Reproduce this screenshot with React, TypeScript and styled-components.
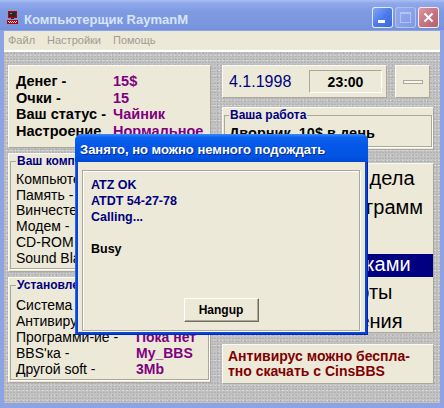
import React from 'react';
import styled, { createGlobalStyle } from 'styled-components';

const GlobalStyle = createGlobalStyle`
  html, body {
    margin: 0;
    padding: 0;
    background: #fff;
  }
  body {
    width: 444px;
    height: 408px;
    overflow: hidden;
    font-family: "Liberation Sans", Arial, sans-serif;
  }
  * {
    box-sizing: border-box;
  }
`;

const Window = styled.div`
  position: relative;
  width: 444px;
  height: 408px;
  display: flex;
  flex-direction: column;
  background: #8ea3e4;
  overflow: hidden;
`;

const TitleBar = styled.div`
  height: 30px;
  flex: none;
  display: flex;
  align-items: center;
  padding: 4px 5px 0 7px;
  background: linear-gradient(to bottom, #aabff3 0%, #90a9ec 10%, #7e9ae1 40%, #7a96df 85%, #7390dc 100%);
`;

const AppIcon = styled.svg`
  width: 11px;
  height: 13px;
  flex: none;
`;

const TitleText = styled.div`
  flex: 1;
  margin-left: 6px;
  padding-top: 5px;
  color: #d8e4f8;
  font-size: 13px;
  font-weight: bold;
  white-space: nowrap;
`;

const CaptionButtons = styled.div`
  display: flex;
  gap: 2px;
`;

const CaptionButton = styled.div<{ $kind: 'min' | 'max' | 'close' }>`
  width: 21px;
  height: 21px;
  border-radius: 3px;
  display: flex;
  align-items: ${p => (p.$kind === 'min' ? 'flex-end' : 'center')};
  justify-content: ${p => (p.$kind === 'min' ? 'flex-start' : 'center')};
  padding: ${p => (p.$kind === 'min' ? '0 0 4px 5px' : '0')};
  border: 1px solid ${p => (p.$kind === 'max' ? 'rgba(255,255,255,0.35)' : 'rgba(255,255,255,0.85)')};
  background: ${p =>
    p.$kind === 'min'
      ? 'linear-gradient(135deg, #82a6f7 0%, #4d7bec 50%, #3a68e4 100%)'
      : p.$kind === 'max'
      ? 'linear-gradient(135deg, #93abee 0%, #8199e2 100%)'
      : 'linear-gradient(135deg, #dc97a0 0%, #c47682 50%, #b5606e 100%)'};
`;

const MinGlyph = styled.span`
  width: 7px;
  height: 3px;
  background: #fff;
`;

const MaxGlyph = styled.span`
  width: 11px;
  height: 11px;
  border: 1px solid rgba(255, 255, 255, 0.35);
  border-top-width: 2px;
`;

const Frame = styled.div`
  flex: 1;
  display: flex;
  flex-direction: column;
  padding: 1px 4px 5px 4px;
  min-height: 0;
`;

const MenuBar = styled.div`
  height: 21px;
  flex: none;
  display: flex;
  align-items: center;
  gap: 12px;
  padding: 0 0 2px 4px;
  background: #ece9d8;
  border-bottom: 2px solid #fff;
  font-size: 11px;
  color: #9e9b91;
`;

const Client = styled.div`
  flex: 1;
  display: flex;
  gap: 11px;
  padding: 13px 0 0 4px;
  background-color: #c4c4c4;
  background-image:
    radial-gradient(circle at 30% 40%, rgba(0, 0, 0, 0.09) 0.7px, transparent 1px),
    radial-gradient(circle at 70% 70%, rgba(255, 255, 255, 0.35) 0.7px, transparent 1px),
    radial-gradient(circle at 50% 20%, rgba(0, 0, 0, 0.07) 0.7px, transparent 1px);
  background-size: 3px 3px, 4px 5px, 7px 6px;
`;

const LeftColumn = styled.div`
  width: 203px;
  flex: none;
  display: flex;
  flex-direction: column;
  gap: 5px;
`;

const RightColumn = styled.div`
  width: 212px;
  flex: none;
  display: flex;
  flex-direction: column;
`;

const Panel = styled.div<{ $h: number; $mt?: number }>`
  height: ${p => p.$h}px;
  margin-top: ${p => p.$mt ?? 0}px;
  flex: none;
  background: #ece9d8;
  border: 1px solid;
  border-color: #fbfaf5 #aca899 #aca899 #fbfaf5;
`;

const GroupPanel = styled(Panel)`
  display: flex;
  flex-direction: column;
  padding: 0 1px 2px 1px;
`;

const Fieldset = styled.fieldset<{ $pl: number; $pt: number }>`
  flex: 1;
  min-width: 0;
  margin: 1px 0 0 0;
  padding: ${p => p.$pt}px 0 0 ${p => p.$pl}px;
  border: 1px solid #aca899;
  box-shadow: 1px 1px 0 #fff;
  overflow: hidden;
`;

const Legend = styled.legend`
  padding: 0 1px;
  color: #000080;
  font-size: 12px;
  font-weight: bold;
  line-height: 12px;
`;

const Rows = styled.div<{ $label: number; $size: number; $lh: number; $bold?: boolean }>`
  display: grid;
  grid-template-columns: ${p => p.$label}px auto;
  font-size: ${p => p.$size}px;
  line-height: ${p => p.$lh}px;
  font-weight: ${p => (p.$bold ? 'bold' : 'normal')};
  white-space: nowrap;
`;

const StatsRows = styled(Rows)`
  padding: 7px 0 0 7px;
`;

const Label = styled.span`
  color: #000;
`;

const Value = styled.span`
  color: #800080;
  font-weight: bold;
`;

const DateRow = styled.div`
  height: 33px;
  display: flex;
  gap: 8px;
`;

const DatePanel = styled(Panel)`
  width: 165px;
  display: flex;
  align-items: center;
  justify-content: space-between;
  padding: 0 4px 0 6px;
`;

const DateText = styled.span`
  color: #000080;
  font-size: 16px;
`;

const TimeBox = styled.div`
  width: 73px;
  height: 23px;
  display: flex;
  align-items: center;
  justify-content: center;
  border: 1px solid;
  border-color: #aca899 #fff #fff #aca899;
  font-size: 14px;
  font-weight: bold;
  color: #000;
`;

const SmallButtonPanel = styled(Panel)`
  width: 35px;
  display: flex;
  align-items: center;
  justify-content: center;
`;

const Dash = styled.span`
  width: 20px;
  height: 4px;
  background: #f7f6f0;
  border: 1px solid #aca899;
`;

const JobText = styled.div`
  font-size: 14.5px;
  line-height: 16.5px;
  font-weight: bold;
  color: #000;
  white-space: nowrap;
`;

const ActionsPanel = styled(Panel)`
  display: flex;
  flex-direction: column;
  gap: 5.6px;
  padding-top: 4px;
  overflow: hidden;
`;

const ActionItem = styled.div<{ $active?: boolean }>`
  height: 23px;
  flex: none;
  line-height: 21px;
  padding-bottom: 2px;
  text-align: center;
  font-size: 20px;
  white-space: nowrap;
  color: ${p => (p.$active ? '#fff' : '#000')};
  background: ${p => (p.$active ? '#000080' : 'transparent')};
`;

const TipPanel = styled(Panel)`
  padding: 4px 0 0 5px;
  color: #800000;
  font-size: 14px;
  font-weight: bold;
  line-height: 15px;
`;

const Dialog = styled.div`
  position: absolute;
  left: 75px;
  top: 134px;
  width: 293px;
  height: 201px;
  display: flex;
  flex-direction: column;
  background: #0845db;
  border-radius: 7px 7px 0 0;
  box-shadow: inset -1px -1px 0 #0027a8, inset 1px 0 0 #2a64e8;
`;

const DialogTitle = styled.div`
  height: 28px;
  flex: none;
  display: flex;
  align-items: center;
  padding: 3px 0 0 5px;
  border-radius: 7px 7px 0 0;
  background: linear-gradient(to bottom, #3d8af7 0%, #0c62ee 12%, #0356e8 45%, #0254e3 80%, #0047d4 100%);
  color: #fff;
  font-size: 13px;
  font-weight: bold;
  white-space: nowrap;
  text-shadow: 1px 1px 0 #0a2a8c;
`;

const DialogBody = styled.div`
  flex: 1;
  display: flex;
  margin: 0 3px 3px 3px;
  padding: 8px 5px 1px 4px;
  background: #ece9d8;
`;

const Console = styled.div`
  flex: 1;
  display: flex;
  flex-direction: column;
  padding: 6px 8px 8px 8px;
  border: 1px solid #aca899;
  box-shadow: 1px 1px 0 #fff, inset 1px 1px 0 #fff;
`;

const ConsoleLine = styled.div<{ $color?: string }>`
  min-height: 16px;
  font-size: 12.5px;
  line-height: 16px;
  font-weight: bold;
  color: ${p => p.$color ?? '#000080'};
  white-space: nowrap;
`;

const HangupButton = styled.button`
  align-self: center;
  margin-top: auto;
  width: 75px;
  height: 24px;
  padding: 0;
  background: #ece9d8;
  border: 1px solid;
  border-color: #fff #716f64 #716f64 #fff;
  box-shadow: inset -1px -1px 0 #aca899;
  font-family: "Liberation Sans", Arial, sans-serif;
  font-size: 12px;
  font-weight: bold;
  color: #000;
`;

const stats = [
  ['Денег -', '15$'],
  ['Очки -', '15'],
  ['Ваш статус -', 'Чайник'],
  ['Настроение', 'Нормальное'],
];

const hardware = [
  ['Компьютер -', '286'],
  ['Память -', '1Mb'],
  ['Винчестер -', '40Mb'],
  ['Модем -', '2400'],
  ['CD-ROM -', 'Нет'],
  ['Sound Blaster -', 'Нет'],
];

const software = [
  ['Система -', 'DOS 6.22'],
  ['Антивирус -', 'Нет'],
  ['Программи-ие -', 'Пока нет'],
  ["BBS'ка -", 'My_BBS'],
  ['Другой soft -', '3Mb'],
];

const actions = [
  'Мои текущие дела',
  'Установка программ',
  'Казино',
  'Работа с дисками',
  'Поиск работы',
  'Курсы обучения',
];

const App: React.FC = () => {
  return (
    <>
      <GlobalStyle />
      <Window>
        <TitleBar>
          <AppIcon viewBox="0 0 11 13">
            <rect x="1" y="0" width="9" height="7" fill="#c00000" />
            <rect x="2" y="1" width="7" height="5" fill="#2a2a2a" />
            <rect x="3" y="2" width="2" height="1" fill="#8a8a8a" />
            <rect x="4" y="7" width="3" height="1" fill="#800000" />
            <rect x="0" y="9" width="11" height="4" fill="#c00000" />
            <rect x="1" y="10" width="1" height="1" fill="#fff" />
            <rect x="3" y="10" width="1" height="1" fill="#fff" />
            <rect x="5" y="10" width="1" height="1" fill="#fff" />
            <rect x="7" y="10" width="1" height="1" fill="#fff" />
            <rect x="9" y="10" width="1" height="1" fill="#fff" />
            <rect x="2" y="11" width="1" height="1" fill="#fff" />
            <rect x="4" y="11" width="1" height="1" fill="#fff" />
            <rect x="6" y="11" width="1" height="1" fill="#fff" />
            <rect x="8" y="11" width="1" height="1" fill="#fff" />
          </AppIcon>
          <TitleText>Компьютерщик RaymanM</TitleText>
          <CaptionButtons>
            <CaptionButton $kind="min">
              <MinGlyph />
            </CaptionButton>
            <CaptionButton $kind="max">
              <MaxGlyph />
            </CaptionButton>
            <CaptionButton $kind="close">
              <svg width="11" height="11" viewBox="0 0 11 11">
                <path d="M1.5 1.5 L9.5 9.5 M9.5 1.5 L1.5 9.5" stroke="#fff" strokeWidth="2" />
              </svg>
            </CaptionButton>
          </CaptionButtons>
        </TitleBar>

        <Frame>
          <MenuBar>
            <span>Файл</span>
            <span>Настройки</span>
            <span>Помощь</span>
          </MenuBar>

          <Client>
            <LeftColumn>
              <Panel $h={83}>
                <StatsRows $label={97} $size={14.5} $lh={16.5} $bold>
                  {stats.map(([label, value]) => (
                    <React.Fragment key={label}>
                      <Label>{label}</Label>
                      <Value>{value}</Value>
                    </React.Fragment>
                  ))}
                </StatsRows>
              </Panel>

              <GroupPanel $h={119}>
                <Fieldset $pl={5} $pt={5}>
                  <Legend>Ваш компьютер</Legend>
                  <Rows $label={110} $size={14} $lh={15.7}>
                    {hardware.map(([label, value]) => (
                      <React.Fragment key={label}>
                        <Label>{label}</Label>
                        <Value>{value}</Value>
                      </React.Fragment>
                    ))}
                  </Rows>
                </Fieldset>
              </GroupPanel>

              <GroupPanel $h={106}>
                <Fieldset $pl={5} $pt={6}>
                  <Legend>Установленное ПО</Legend>
                  <Rows $label={120} $size={14} $lh={16}>
                    {software.map(([label, value]) => (
                      <React.Fragment key={label}>
                        <Label>{label}</Label>
                        <Value>{value}</Value>
                      </React.Fragment>
                    ))}
                  </Rows>
                </Fieldset>
              </GroupPanel>
            </LeftColumn>

            <RightColumn>
              <DateRow>
                <DatePanel $h={33}>
                  <DateText>4.1.1998</DateText>
                  <TimeBox>23:00</TimeBox>
                </DatePanel>
                <SmallButtonPanel $h={33}>
                  <Dash />
                </SmallButtonPanel>
              </DateRow>

              <GroupPanel $h={43} $mt={9}>
                <Fieldset $pl={4} $pt={4}>
                  <Legend>Ваша работа</Legend>
                  <JobText>Дворник, 10$ в день</JobText>
                </Fieldset>
              </GroupPanel>

              <ActionsPanel $h={170} $mt={13}>
                {actions.map((action, i) => (
                  <ActionItem key={action} $active={i === 3}>
                    {action}
                  </ActionItem>
                ))}
              </ActionsPanel>

              <TipPanel $h={40} $mt={11}>
                Антивирус можно беспла-
                <br />
                тно скачать с CinsBBS
              </TipPanel>
            </RightColumn>
          </Client>
        </Frame>

        <Dialog>
          <DialogTitle>Занято, но можно немного подождать</DialogTitle>
          <DialogBody>
            <Console>
              <ConsoleLine>ATZ OK</ConsoleLine>
              <ConsoleLine>ATDT 54-27-78</ConsoleLine>
              <ConsoleLine>Calling...</ConsoleLine>
              <ConsoleLine />
              <ConsoleLine $color="#000">Busy</ConsoleLine>
              <HangupButton>Hangup</HangupButton>
            </Console>
          </DialogBody>
        </Dialog>
      </Window>
    </>
  );
};

export default App;
